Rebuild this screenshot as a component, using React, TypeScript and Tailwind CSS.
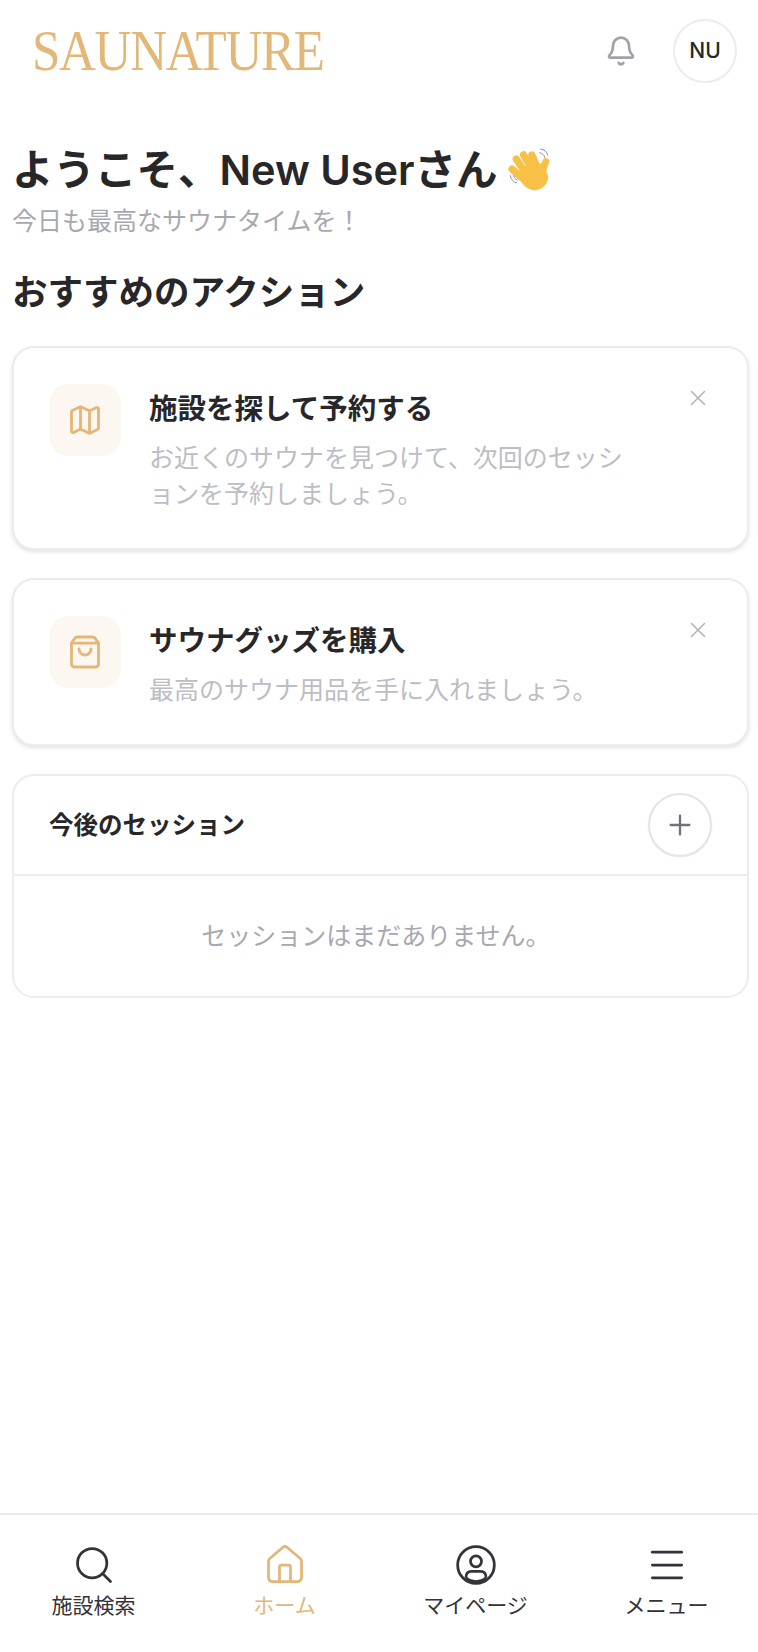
import { Bell, House, Map, Menu, Plus, Search, ShoppingBag, X } from 'lucide-react';

const fontStack = "font-['Inter','Noto_Sans_CJK_JP',sans-serif]";

function WavingHand() {
  return (
    <svg viewBox="0 0 48 48" className="ml-[10px] h-[46px] w-[46px] shrink-0" fill="none">
      <g fill="#f8c044">
        <rect x="10" y="7" width="7.5" height="25" rx="3.7" transform="rotate(-34 14 20)" />
        <rect x="17" y="3" width="7.5" height="26" rx="3.7" transform="rotate(-30 21 16)" />
        <rect x="24.5" y="4" width="7.5" height="25" rx="3.7" transform="rotate(-24 28 16)" />
        <rect x="5" y="17" width="7.5" height="20" rx="3.7" transform="rotate(-48 9 27)" />
        <rect x="34" y="11" width="7" height="20" rx="3.5" transform="rotate(18 37 21)" />
        <path d="M14 20 L36 17 L42 30 C42 40 34 46 26 45 C19 44 14 38 10 30 Z" />
      </g>
      <g stroke="#8a8f98" strokeWidth="1" strokeLinecap="round">
        <path d="M34 2c4 .5 6.500 3 7.500 6.500" />
        <path d="M33 6c3 .5 4.500 2 5.500 5" />
        <path d="M2.500 30c.5 4 3 6.500 6.500 7.500" />
        <path d="M6 30c.5 2.500 1.500 3.500 3.500 4.500" />
      </g>
    </svg>
  );
}

function UserIcon() {
  return (
    <svg viewBox="0 0 24 24" className="h-11 w-11" fill="none" stroke="currentColor" strokeWidth="1.5">
      <circle cx="12" cy="12" r="10" />
      <circle cx="12" cy="10" r="3" />
      <path d="M6.500 19c0-2.200 1-3.500 3-3.500h5c2 0 3 1.300 3 3.500" />
      <path d="M6.500 19c1.500 1.300 3.300 2 5.500 2s4-.7 5.500-2" />
    </svg>
  );
}

const actions = [
  {
    title: '施設を探して予約する',
    text: 'お近くのサウナを見つけて、次回のセッションを予約しましょう。',
    icon: Map,
  },
  {
    title: 'サウナグッズを購入',
    text: '最高のサウナ用品を手に入れましょう。',
    icon: ShoppingBag,
  },
];

const navigation = [
  { name: '施設検索', icon: <Search size={44} strokeWidth={1.5} /> },
  { name: 'ホーム', icon: <House size={44} strokeWidth={1.5} />, active: true },
  { name: 'マイページ', icon: <UserIcon /> },
  { name: 'メニュー', icon: <Menu size={44} strokeWidth={1.5} /> },
];

export default function App() {
  return (
    <div className={`${fontStack} flex min-h-[1652px] w-full flex-col bg-white text-[#27272a]`}>
      <header className="flex h-[102px] items-center justify-between pb-[1px] pl-[32px] pr-[21px]">
        <span className="origin-left scale-x-[.88] font-['Liberation_Serif',serif] text-[58px] leading-none tracking-[-1.5px] text-[#e3b778]">
          SAUNATURE
        </span>
        <div className="flex items-center gap-[36px]">
          <Bell size={32} className="text-[#a1a1aa]" />
          <div className="flex h-16 w-16 items-center justify-center rounded-full border-2 border-[#ececee] text-[21px] font-medium">
            NU
          </div>
        </div>
      </header>

      <main className="flex flex-col pl-[12px] pr-[9px] pt-[43px]">
        <div className="flex items-center">
          <h1 className="text-[41.5px] font-semibold leading-[50px]">ようこそ、New Userさん</h1>
          <WavingHand />
        </div>
        <p className="mt-[8px] text-[25px] leading-[36px] text-[#a8a8b0]">今日も最高なサウナタイムを！</p>
        <h2 className="mt-[30px] text-[35.5px] font-bold leading-[48px]">おすすめのアクション</h2>

        <div className="mt-[29px] flex flex-col gap-[28px]">
          {actions.map((item) => (
            <section
              key={item.title}
              className="flex items-start gap-[28px] rounded-[22px] border-2 border-[#ececee] bg-white pb-[36px] pl-[35px] pr-[24px] pt-[36px] shadow-[0_2px_4px_rgba(0,0,0,0.12)]"
            >
              <div className="flex h-[72px] w-[72px] shrink-0 items-center justify-center rounded-[20px] bg-[#fcf7f1] text-[#e3b778]">
                <item.icon size={36} strokeWidth={1.9} />
              </div>
              <div className="flex-1 pr-[10px] pt-[1px]">
                <h3 className="text-[28.5px] font-bold leading-[48px]">{item.title}</h3>
                <p className="mt-[7px] text-[25px] leading-[36px] text-[#bdbdc5]">{item.text}</p>
              </div>
              <X size={26} strokeWidth={1.5} className="mr-[12px] mt-[1px] shrink-0 text-[#b4b4bb]" />
            </section>
          ))}

          <section className="rounded-[22px] border-2 border-[#ececee] bg-white">
            <div className="flex h-[100px] items-center justify-between border-b-2 border-[#ececee] pl-[35px] pr-[35px]">
              <h3 className="text-[24.5px] font-bold">今後のセッション</h3>
              <button className="flex h-16 w-16 items-center justify-center rounded-full border-2 border-[#e4e4e7] shadow-[0_1px_2px_rgba(0,0,0,0.05)]">
                <Plus size={32} strokeWidth={1.75} className="text-[#71717a]" />
              </button>
            </div>
            <p className="py-[40px] pr-[9px] text-center text-[25px] leading-[40px] text-[#a8a8b0]">セッションはまだありません。</p>
          </section>
        </div>
      </main>

      <nav className="mt-auto grid h-[139px] grid-cols-4 gap-x-[8px] border-t-2 border-[#ececee] pl-[2px] pt-[28px]">
        {navigation.map((item) => (
          <div
            key={item.name}
            className={`flex flex-col items-center ${item.active ? 'text-[#e3b778]' : 'text-[#33333a]'}`}
          >
            {item.icon}
            <span className="mt-[4px] text-[21px] leading-[30px]">{item.name}</span>
          </div>
        ))}
      </nav>
    </div>
  );
}
